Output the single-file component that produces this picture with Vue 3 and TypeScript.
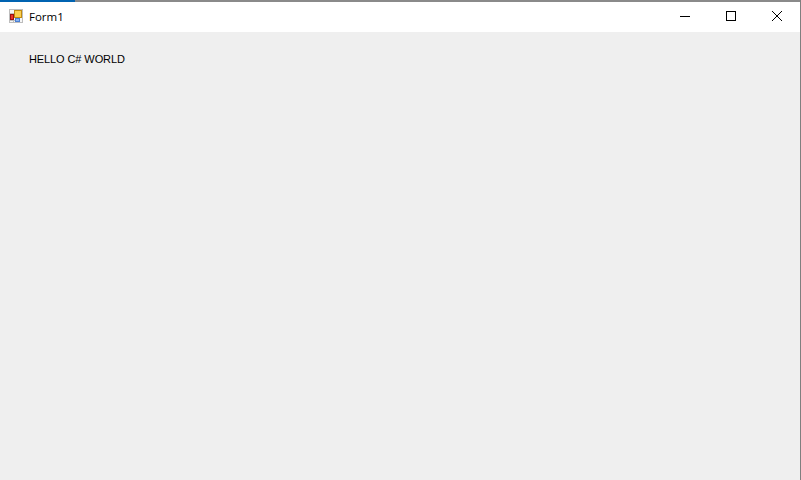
<template>
  <div class="window">
    <div class="top-line"><div class="top-progress"></div></div>
    <header class="title-bar">
      <svg class="form-icon" width="14" height="14" viewBox="0 0 14 14">
        <rect x="0" y="0" width="14" height="14" fill="#bdbdbd" />
        <rect x="1" y="1" width="12" height="12" fill="#f6f6f6" />
        <path d="M0 4.5H5M4.5 4V14M0 11.5H6" stroke="#bdbdbd" fill="none" />
        <rect x="1" y="5" width="4" height="6" fill="#9c1010" />
        <rect x="2" y="6" width="2" height="4" fill="#e8352c" />
        <rect x="5" y="1" width="8" height="8" fill="#c08a10" />
        <rect x="6" y="2" width="6" height="6" fill="#fbcf50" />
        <rect x="6" y="9" width="5" height="4" fill="#4a7fd4" />
        <rect x="7" y="10" width="3" height="2" fill="#8ab4f0" />
      </svg>
      <span class="title">Form1</span>
      <div class="controls">
        <button class="control" type="button" aria-label="Minimize">
          <svg width="10" height="10" viewBox="0 0 10 10"><path d="M0 5.5H10" stroke="#000" fill="none" /></svg>
        </button>
        <button class="control" type="button" aria-label="Maximize">
          <svg width="10" height="10" viewBox="0 0 10 10"><rect x="0.5" y="0.5" width="9" height="9" stroke="#000" fill="none" /></svg>
        </button>
        <button class="control" type="button" aria-label="Close">
          <svg width="10" height="10" viewBox="0 0 10 10"><path d="M0 0L10 10M10 0L0 10" stroke="#000" fill="none" /></svg>
        </button>
      </div>
    </header>
    <main class="client">
      <label class="hello">HELLO C# WORLD</label>
    </main>
  </div>
</template>

<script setup lang="ts">
</script>

<style>
html,
body {
  margin: 0;
  overflow: hidden;
}
</style>

<style scoped>
.window {
  width: 801px;
  height: 480px;
  display: flex;
  flex-direction: column;
  background: #efefef;
  box-sizing: border-box;
  border-right: 1px solid #7f7f7f;
  overflow: hidden;
}

.top-line {
  height: 2px;
  background: #8a8a8a;
  flex-shrink: 0;
}

.top-progress {
  width: 75px;
  height: 2px;
  background: #0063b1;
}

.title-bar {
  height: 30px;
  box-sizing: border-box;
  padding: 0 0 2px 9px;
  flex-shrink: 0;
  display: flex;
  align-items: center;
  background: #ffffff;
}

.form-icon {
  flex-shrink: 0;
}

.title {
  margin-left: 6px;
  font-family: "Open Sans", "Noto Sans", sans-serif;
  font-size: 11.5px;
  color: #000;
}

.controls {
  margin-left: auto;
  display: flex;
  height: 100%;
}

.control {
  width: 46px;
  height: 100%;
  padding: 0;
  border: 0;
  background: transparent;
  display: flex;
  align-items: center;
  justify-content: center;
}

.client {
  flex: 1;
  padding: 20px 29px;
}

.hello {
  display: block;
  font-family: "Liberation Sans", Arial, sans-serif;
  font-size: 11px;
  line-height: 14px;
  letter-spacing: -0.1px;
  color: #000;
}
</style>
